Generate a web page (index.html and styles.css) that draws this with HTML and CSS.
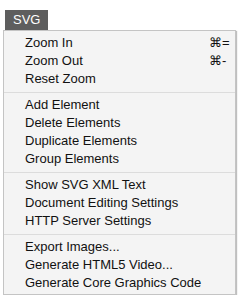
FILE: index.html
```html
<!DOCTYPE html>
<html>
<head>
<meta charset="utf-8">
<link rel="stylesheet" href="styles.css">
</head>
<body>
<div class="wrap">
  <div class="tab">SVG</div>
  <div class="menu">
    <div class="item"><span>Zoom In</span><span class="key">⌘=</span></div>
    <div class="item"><span>Zoom Out</span><span class="key">⌘-</span></div>
    <div class="item"><span>Reset Zoom</span></div>
    <div class="sep"></div>
    <div class="item"><span>Add Element</span></div>
    <div class="item"><span>Delete Elements</span></div>
    <div class="item"><span>Duplicate Elements</span></div>
    <div class="item"><span>Group Elements</span></div>
    <div class="sep"></div>
    <div class="item"><span>Show SVG XML Text</span></div>
    <div class="item"><span>Document Editing Settings</span></div>
    <div class="item"><span>HTTP Server Settings</span></div>
    <div class="sep"></div>
    <div class="item"><span>Export Images...</span></div>
    <div class="item"><span>Generate HTML5 Video...</span></div>
    <div class="item"><span>Generate Core Graphics Code</span></div>
  </div>
</div>
</body>
</html>
```

FILE: styles.css
```css
html, body {
  margin: 0;
  padding: 0;
  background: #ffffff;
}
.wrap {
  padding-top: 10px;
  font-family: "Liberation Sans", Arial, sans-serif;
  font-size: 13px;
}
.tab {
  display: inline-block;
  margin-left: 5px;
  height: 20px;
  line-height: 20px;
  padding: 0 8px;
  background: #5e5e5e;
  color: #ffffff;
  vertical-align: top;
}
.menu {
  margin-left: 3px;
  width: 231px;
  background: #f4f4f4;
  border: 1px solid #c4c4c4;
  box-shadow: 1px 1px 1px rgba(0, 0, 0, 0.25);
  padding: 3px 0 2px;
}
.item {
  display: flex;
  justify-content: space-between;
  height: 18px;
  line-height: 18px;
  padding: 0 11px 0 21px;
  color: #111111;
}
.key {
  width: 15px;
  text-align: left;
  white-space: nowrap;
}
.sep {
  height: 1px;
  background: #dcdcdc;
  margin: 4px 0 3px;
}
```
